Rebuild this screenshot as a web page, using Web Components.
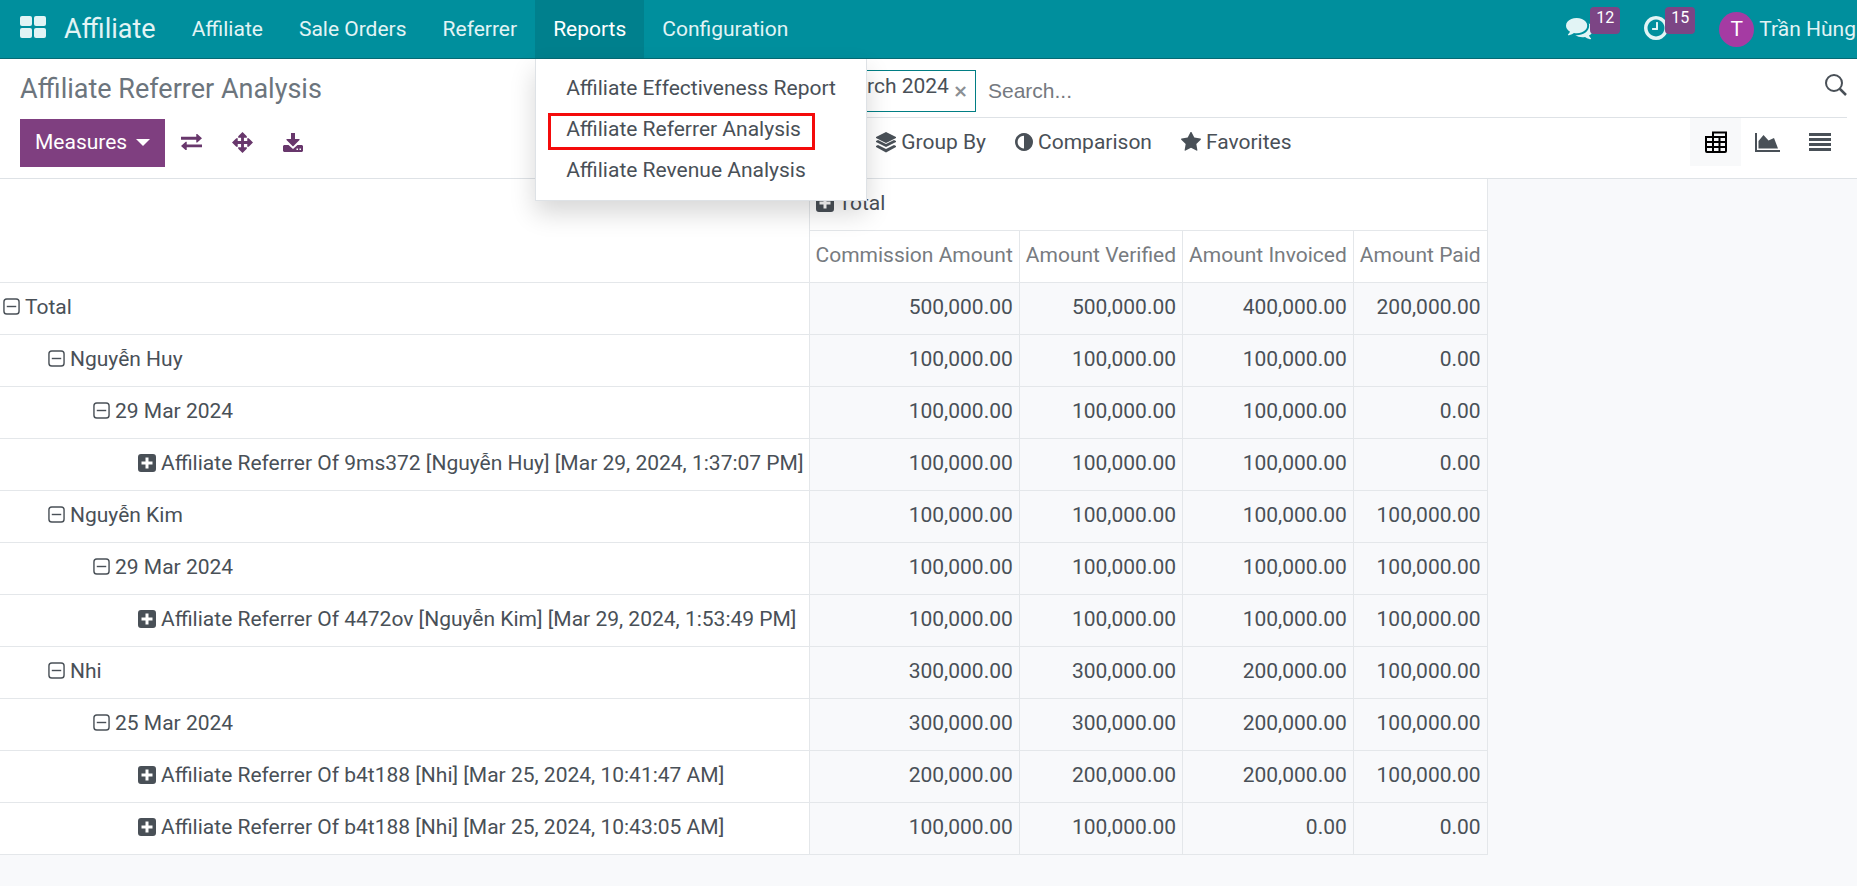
<!DOCTYPE html>
<html lang="en">
<head>
<meta charset="utf-8">
<meta name="viewport" content="width=device-width, initial-scale=1">
<title>Affiliate Referrer Analysis</title>
<style>
	html {
		height: 100%;
	}

	body {
		margin: 0;
		min-height: 100%;
		background: #f8f9fb;
		color: #495057;
		font: 21px/32px Roboto, "Noto Sans", sans-serif;
	}
</style>
</head>
<body>
<app-navbar brand="Affiliate" user="Trần Hùng">
	<nav-item label="Affiliate"></nav-item>
	<nav-item label="Sale Orders"></nav-item>
	<nav-item label="Referrer"></nav-item>
	<nav-item label="Reports" open>
		<menu-link>Affiliate Effectiveness Report</menu-link>
		<menu-link marked>Affiliate Referrer Analysis</menu-link>
		<menu-link>Affiliate Revenue Analysis</menu-link>
	</nav-item>
	<nav-item label="Configuration"></nav-item>
	<nav-counter slot="tray" icon="comments" count="12" label="Messages"></nav-counter>
	<nav-counter slot="tray" icon="clock" count="15" label="Activities"></nav-counter>
</app-navbar>
<control-panel>
	<span slot="title">Affiliate Referrer Analysis</span>
	<search-facet slot="facets">March 2024</search-facet>
	<filter-button slot="filters" icon="layers">Group By</filter-button>
	<filter-button slot="filters" icon="adjust">Comparison</filter-button>
	<filter-button slot="filters" icon="star">Favorites</filter-button>
</control-panel>
<pivot-table></pivot-table>

<script>
const circle =
  "M1664 896q0 209-103 385.5t-279.5 279.5-385.5 103-385.5-103-279.5-279.5-103-385.5 103-385.5 279.5-279.5 385.5-103 385.5 103 279.5 279.5 103 385.5z";

const icons = {
  apps: `<svg viewBox="0 0 26 22"><rect width="12" height="10" rx="2"/><rect x="14" width="12" height="10" rx="2"/><rect y="12" width="12" height="10" rx="2"/><rect x="14" y="12" width="12" height="10" rx="2"/></svg>`,
  comments: `<svg viewBox="0 128 1792 1536"><path d="M1408 768q0 139-94 257t-256.5 186.5-353.5 68.5q-86 0-176-16-124 88-278 128-36 9-86 16h-3q-11 0-20.5-8t-11.5-21q-1-3-1-6.5t.5-6.5 2-6l2.5-5 3.5-5.5 4-5 4.5-5 4-4.5q5-6 23-25t26-29.5 22.5-29 25-38.5 20.5-44q-124-72-195-177t-71-224q0-139 94-257t256.5-186.5 353.5-68.5 353.5 68.5 256.5 186.5 94 257zm384 256q0 120-71 224.5t-195 176.5q10 24 20.5 44t25 38.5 22.5 29 26 29.5 23 25q1 1 4 4.5t4.5 5 4 5 3.5 5.5l2.5 5 2 6 .5 6.5-1 6.5q-3 14-13 22t-22 7q-50-7-86-16-154-40-278-128-90 16-176 16-271 0-472-132 58 4 88 4 161 0 309-45t264-129q125-92 192-212t67-254q0-77-23-152 129 71 204 178t75 230z"/></svg>`,
  clock: `<svg viewBox="128 128 1536 1536"><path fill-rule="evenodd" d="M1024 544v448q0 14-9 23t-23 9h-320q-14 0-23-9t-9-23v-64q0-14 9-23t23-9h224v-352q0-14 9-23t23-9h64q14 0 23 9t9 23zM1440 896q0-148-73-273t-198-198-273-73-273 73-198 198-73 273 73 273 198 198 273 73 273-73 198-198 73-273z${circle}"/></svg>`,
  adjust: `<svg viewBox="128 128 1536 1536"><path fill-rule="evenodd" d="M896 1440v-1088q-148 0-273 73t-198 198-73 273 73 273 198 198 273 73z${circle}"/></svg>`,
  star: `<svg viewBox="64 60 1664 1600"><path d="M1728 647q0 22-26 48l-363 354 86 500q1 7 1 20 0 21-10.5 35.5t-30.5 14.5q-19 0-40-12l-449-236-449 236q-22 12-40 12-21 0-31.5-14.5t-10.5-35.5q0-6 2-20l86-500-364-354q-25-27-25-48 0-37 56-46l502-73 225-455q19-41 49-41t49 41l225 455 502 73q56 9 56 46z"/></svg>`,
  filter: `<svg viewBox="0 0 18 18"><path d="M0 1h18l-7 8v9l-4-4v-5z"/></svg>`,
  layers: `<svg viewBox="0 0 20 21"><path d="M10 0l10 5v1l-10 5L0 6V5zM0 9l2-1 8 4 8-4 2 1v1l-10 5-10-5zM0 14l2-1 8 4 8-4 2 1v1l-10 5.500-10-5.500z"/></svg>`,
  swap: `<svg viewBox="0 0 22 17"><path d="M0 3h16V0h1l5 4.500-5 4.500h-1V6H0zM22 14H6v3H5l-5-4.500L5 8h1v3h16z"/></svg>`,
  move: `<svg viewBox="0 0 22 22"><path d="M11 0l4.500 4.500V6h-3v3.500H16v-3h1.500L22 11l-4.500 4.500H16v-3h-3.500V16h3v1.500L11 22l-4.500-4.500V16h3v-3.500H6v3H4.500L0 11l4.500-4.500H6v3h3.500V6h-3V4.500z"/></svg>`,
  download: `<svg viewBox="0 0 20 19"><path fill-rule="evenodd" d="M8 0h4v6h4.500v1L10 13.500 3.500 7V6H8zM1 12h4.500l4.500 4 4.500-4H19l1 1v5l-1 1H1l-1-1v-5zM13.500 15.500v1.500H15v-1.500zM16.500 15.500v1.500H18v-1.500z"/></svg>`,
  search: `<svg viewBox="0 0 22 22" fill="none" stroke="currentColor" stroke-width="2"><circle cx="9" cy="9" r="8"/><path d="M14.500 14.500l6.500 6.500" stroke-width="2.500"/></svg>`,
  pivot: `<svg viewBox="0 0 22 22" fill="none" stroke="currentColor" stroke-width="2"><path d="M8 6V1.500h13V20a1 1 0 0 1-1 1H2a1 1 0 0 1-1-1V6h20M1 11h20M1 16h20M8 6v15M14.500 6v15"/></svg>`,
  chart: `<svg viewBox="0 0 25 19"><path d="M0 0h2v17h23v2H0zM3.500 15.500V8L8.500 2l5 5.500L19 5l4 10.500z"/></svg>`,
  list: `<svg viewBox="0 0 22 19"><path d="M0 0h22v3H0zM0 5h22v3H0zM0 10h22v3H0zM0 15h22v3H0z"/></svg>`,
  plus: `<svg viewBox="0 0 18 18"><path fill-rule="evenodd" d="M3 0h12a3 3 0 0 1 3 3v12a3 3 0 0 1-3 3H3a3 3 0 0 1-3-3V3a3 3 0 0 1 3-3zM7.500 3.500v4h-4v3h4v4h3v-4h4v-3h-4v-4z"/></svg>`,
  minus: `<svg viewBox="0 0 18 18" fill="none" stroke="currentColor" stroke-width="1.500"><rect x="1" y="1" width="16" height="16" rx="3"/><path d="M4 9h10"/></svg>`,
};

class AppIcon extends HTMLElement {
  constructor() {
    super();
    this.attachShadow({ mode: "open" });
  }

  connectedCallback() {
    this.shadowRoot.innerHTML = `
      <style>
        :host {
          display: inline-block;
          flex: none;
          width: 18px;
          line-height: 0;
        }
        svg {
          display: block;
          width: 100%;
          fill: currentColor;
        }
        svg[fill="none"] {
          fill: none;
        }
      </style>
      ${icons[this.getAttribute("name")] || ""}`;
    this.setAttribute("aria-hidden", "true");
  }
}

class MenuLink extends HTMLElement {
  constructor() {
    super();
    this.attachShadow({ mode: "open" }).innerHTML = `
      <style>
        :host {
          display: block;
        }
        a {
          display: block;
          padding: 4px 30px 5px;
          color: #495057;
          text-decoration: none;
          white-space: nowrap;
        }
        span {
          display: inline-block;
          position: relative;
          vertical-align: top;
        }
        :host([marked]) span::after {
          content: "";
          position: absolute;
          inset: 0 -14px -5px -18px;
          border: 3px solid #f40b0b;
        }
      </style>
      <a href="#"><span><slot></slot></span></a>`;
  }
}

class NavItem extends HTMLElement {
  constructor() {
    super();
    this.attachShadow({ mode: "open" });
  }

  connectedCallback() {
    this.shadowRoot.innerHTML = `
      <style>
        :host {
          display: flex;
          position: relative;
        }
        button {
          padding: 0 18px;
          border: 0;
          background: none;
          color: #e2f4f5;
          font: inherit;
          white-space: nowrap;
        }
        :host([open]) button {
          background: #00808d;
          color: #fff;
        }
        #menu {
          display: none;
          position: absolute;
          top: 100%;
          left: 0;
          margin-top: 1px;
          padding: 9px 0;
          border: 1px solid #dee2e6;
          border-top: 0;
          background: #fff;
          box-shadow: 0 12px 24px rgba(0, 0, 0, 0.16);
        }
        :host([open]) #menu {
          display: block;
        }
      </style>
      <button type="button">${this.getAttribute("label")}</button>
      <div id="menu"><slot></slot></div>`;
    this.shadowRoot.querySelector("button").addEventListener("click", this);
  }

  handleEvent() {
    if (this.children.length) {
      this.toggleAttribute("open");
    }
  }
}

class NavCounter extends HTMLElement {
  constructor() {
    super();
    this.attachShadow({ mode: "open" });
  }

  connectedCallback() {
    this.shadowRoot.innerHTML = `
      <style>
        :host {
          display: flex;
        }
        button {
          display: flex;
          align-items: center;
          position: relative;
          padding: 0 27px 2px 0;
          border: 0;
          background: none;
          color: #e2f4f5;
          font: inherit;
        }
        app-icon {
          width: 24px;
        }
        app-icon[name="comments"] {
          width: 27px;
        }
        #badge {
          position: absolute;
          top: 7px;
          right: 0;
          height: 27px;
          padding: 0 6px;
          border-radius: 4px;
          background: #7c4585;
          color: #fff;
          font-size: 16px;
          line-height: 21px;
        }
      </style>
      <button type="button" aria-label="${this.getAttribute("label")}">
        <app-icon name="${this.getAttribute("icon")}"></app-icon>
        <span id="badge">${this.getAttribute("count")}</span>
      </button>`;
  }
}

class AppNavbar extends HTMLElement {
  constructor() {
    super();
    this.attachShadow({ mode: "open" });
  }

  connectedCallback() {
    const user = this.getAttribute("user");
    this.shadowRoot.innerHTML = `
      <style>
        :host {
          display: flex;
          position: relative;
          z-index: 10;
          height: 58px;
          border-bottom: 1px solid #066a74;
          background: #008f9d;
          color: #e2f4f5;
        }
        button {
          display: flex;
          align-items: center;
          border: 0;
          background: none;
          color: inherit;
          font: inherit;
        }
        #apps {
          padding: 0 0 4px 20px;
        }
        #apps app-icon {
          width: 26px;
        }
        #brand {
          padding: 0 18px;
          align-self: center;
          color: inherit;
          font-size: 27px;
          text-decoration: none;
        }
        nav {
          display: flex;
        }
        #tray {
          display: flex;
          gap: 24px;
          margin-left: auto;
        }
        #user {
          gap: 5px;
          padding: 0 1px 0 0;
          white-space: nowrap;
        }
        #avatar {
          width: 35px;
          border-radius: 50%;
          background: #a53ba3;
          color: #fff;
          line-height: 35px;
        }
      </style>
      <button id="apps" type="button" aria-label="Apps"><app-icon name="apps"></app-icon></button>
      <a id="brand" href="#">${this.getAttribute("brand")}</a>
      <nav><slot></slot></nav>
      <div id="tray">
        <slot name="tray"></slot>
        <button id="user" type="button"><span id="avatar">${user[0]}</span>${user}</button>
      </div>`;
  }
}

class SearchFacet extends HTMLElement {
  constructor() {
    super();
    this.attachShadow({ mode: "open" }).innerHTML = `
      <style>
        :host {
          display: flex;
          flex: none;
          height: 40px;
          border: 1px solid #017e84;
          white-space: nowrap;
        }
        #kind {
          display: flex;
          align-items: center;
          padding: 0 12px;
          background: #017e84;
          color: #fff;
        }
        #value {
          padding-left: 6px;
          line-height: 30px;
        }
        button {
          padding: 0 7px 0 4px;
          border: 0;
          background: none;
          color: #8a8f94;
          font: bold 18px/38px "DejaVu Sans", sans-serif;
        }
      </style>
      <span id="kind"><app-icon name="filter"></app-icon></span>
      <span id="value"><slot></slot></span>
      <button type="button" aria-label="Remove">×</button>`;
    this.shadowRoot.querySelector("button").addEventListener("click", this);
  }

  handleEvent() {
    this.remove();
  }
}

class FilterButton extends HTMLElement {
  constructor() {
    super();
    this.attachShadow({ mode: "open" });
  }

  connectedCallback() {
    this.shadowRoot.innerHTML = `
      <style>
        :host {
          display: block;
        }
        button {
          display: flex;
          align-items: center;
          gap: 5px;
          padding: 0;
          border: 0;
          background: none;
          color: inherit;
          font: inherit;
          white-space: nowrap;
        }
        app-icon[name="layers"],
        app-icon[name="star"] {
          width: 20px;
        }
      </style>
      <button type="button"><app-icon name="${this.getAttribute("icon")}"></app-icon><span><slot></slot></span></button>`;
  }
}

class ControlPanel extends HTMLElement {
  constructor() {
    super();
    this.attachShadow({ mode: "open" }).innerHTML = `
      <style>
        :host {
          display: grid;
          grid-template-columns: minmax(0, 5fr) minmax(0, 7fr);
          grid-template-rows: 59px 49px;
          column-gap: 12px;
          padding: 0 10px 11px 20px;
          border-bottom: 1px solid #dee2e6;
          background: #fff;
        }
        h1 {
          margin: 0;
          padding-top: 14px;
          color: #6c757d;
          font-size: 27px;
          font-weight: 400;
        }
        button {
          border: 0;
          background: none;
          color: inherit;
          font: inherit;
        }
        #search {
          display: flex;
          align-items: center;
          gap: 12px;
          padding-top: 6px;
          border-bottom: 1px solid #dee2e6;
        }
        input {
          flex: 1;
          min-width: 0;
          padding: 0;
          border: 0;
          outline: 0;
          color: #495057;
          font: 21px/32px "Liberation Sans", Arial, sans-serif;
        }
        input::placeholder {
          color: #757980;
        }
        #go {
          padding: 0 0 4px;
        }
        #go app-icon {
          width: 22px;
        }
        #actions,
        #filters,
        #views {
          display: flex;
          align-items: center;
        }
        #actions {
          align-items: stretch;
          padding-top: 1px;
          color: #68376c;
        }
        #actions button {
          display: flex;
          align-items: center;
          padding: 0 15px 2px;
        }
        #actions #measures {
          gap: 9px;
          margin-right: 1px;
          background: #7f3f80;
          color: #fff;
        }
        #measures::after {
          content: "";
          border: 7px solid transparent;
          border-top: 7px solid;
          border-bottom: 0;
        }
        #actions app-icon {
          width: 21px;
        }
        #actions app-icon[name="download"] {
          width: 20px;
        }
        #filters {
          gap: 29px;
          padding: 0 0 1px 88px;
        }
        #views {
          gap: 1px;
          margin-left: auto;
          align-self: stretch;
          padding-right: 2px;
        }
        #views button {
          display: flex;
          align-items: center;
          justify-content: center;
          width: 51px;
          height: 100%;
          padding: 0;
        }
        #views app-icon {
          width: 22px;
        }
        #views app-icon[name="chart"] {
          width: 25px;
        }
        #views button[aria-pressed="true"] {
          background: #f8f9fa;
          color: #000;
        }
      </style>
      <h1><slot name="title"></slot></h1>
      <div id="search">
        <slot name="facets"></slot>
        <input type="text" placeholder="Search..." aria-label="Search">
        <button id="go" type="button" aria-label="Search"><app-icon name="search"></app-icon></button>
      </div>
      <div id="actions">
        <button id="measures" type="button">Measures</button>
        <button type="button" aria-label="Flip axis"><app-icon name="swap"></app-icon></button>
        <button type="button" aria-label="Expand all"><app-icon name="move"></app-icon></button>
        <button type="button" aria-label="Download"><app-icon name="download"></app-icon></button>
      </div>
      <div id="filters">
        <slot name="filters"></slot>
        <div id="views">
          <button type="button" aria-label="Pivot" aria-pressed="true"><app-icon name="pivot"></app-icon></button>
          <button type="button" aria-label="Graph" aria-pressed="false"><app-icon name="chart"></app-icon></button>
          <button type="button" aria-label="List" aria-pressed="false"><app-icon name="list"></app-icon></button>
        </div>
      </div>`;
    this.shadowRoot.getElementById("views").addEventListener("click", this);
  }

  handleEvent(event) {
    const clicked = event.target.closest("button");
    if (!clicked) return;
    for (const button of event.currentTarget.children) {
      button.setAttribute("aria-pressed", button === clicked);
    }
  }
}

const measures = ["Commission Amount", "Amount Verified", "Amount Invoiced", "Amount Paid"];

// level, icon, label, one value per measure
const rows = [
  [0, "minus", "Total", 500000, 500000, 400000, 200000],
  [1, "minus", "Nguyễn Huy", 100000, 100000, 100000, 0],
  [2, "minus", "29 Mar 2024", 100000, 100000, 100000, 0],
  [3, "plus", "Affiliate Referrer Of 9ms372 [Nguyễn Huy] [Mar 29, 2024, 1:37:07 PM]", 100000, 100000, 100000, 0],
  [1, "minus", "Nguyễn Kim", 100000, 100000, 100000, 100000],
  [2, "minus", "29 Mar 2024", 100000, 100000, 100000, 100000],
  [3, "plus", "Affiliate Referrer Of 4472ov [Nguyễn Kim] [Mar 29, 2024, 1:53:49 PM]", 100000, 100000, 100000, 100000],
  [1, "minus", "Nhi", 300000, 300000, 200000, 100000],
  [2, "minus", "25 Mar 2024", 300000, 300000, 200000, 100000],
  [3, "plus", "Affiliate Referrer Of b4t188 [Nhi] [Mar 25, 2024, 10:41:47 AM]", 200000, 200000, 200000, 100000],
  [3, "plus", "Affiliate Referrer Of b4t188 [Nhi] [Mar 25, 2024, 10:43:05 AM]", 100000, 100000, 0, 0],
];

const format = (value) =>
  value.toLocaleString("en-US", { minimumFractionDigits: 2 });

class PivotTable extends HTMLElement {
  constructor() {
    super();
    this.attachShadow({ mode: "open" });
  }

  connectedCallback() {
    this.shadowRoot.innerHTML = `
      <style>
        :host {
          display: block;
          overflow-x: auto;
        }
        table {
          border-spacing: 0;
          background: #fff;
        }
        th,
        td {
          padding: 8px 6px 11px;
          border: solid #e4e7ea;
          border-width: 0 1px 1px 0;
          font-weight: 400;
          text-align: left;
          white-space: nowrap;
        }
        thead tr + tr th {
          color: #777b80;
        }
        tbody th {
          padding-right: 5px;
          padding-left: calc(var(--level) * 45px + 3px);
        }
        td {
          background: #f8f9fb;
          text-align: right;
        }
        button {
          display: flex;
          align-items: center;
          gap: 5px;
          padding: 0;
          border: 0;
          background: none;
          color: inherit;
          font: inherit;
        }
        app-icon[name="minus"] {
          width: 17px;
          margin-bottom: 2px;
        }
      </style>
      <table>
        <thead>
          <tr>
            <th rowspan="2"></th>
            <th colspan="${measures.length}">${this.#header("plus", "Total")}</th>
          </tr>
          <tr>${measures.map((name) => `<th>${name}</th>`).join("")}</tr>
        </thead>
        <tbody>${rows.map((row) => this.#row(row)).join("")}</tbody>
      </table>`;
  }

  #header(icon, label) {
    return `<button type="button"><app-icon name="${icon}"></app-icon>${label}</button>`;
  }

  #row([level, icon, label, ...values]) {
    return `<tr>
      <th style="--level: ${level}">${this.#header(icon, label)}</th>
      ${values.map((value) => `<td>${format(value)}</td>`).join("")}
    </tr>`;
  }
}

customElements.define("app-icon", AppIcon);
customElements.define("menu-link", MenuLink);
customElements.define("nav-item", NavItem);
customElements.define("nav-counter", NavCounter);
customElements.define("app-navbar", AppNavbar);
customElements.define("search-facet", SearchFacet);
customElements.define("filter-button", FilterButton);
customElements.define("control-panel", ControlPanel);
customElements.define("pivot-table", PivotTable);
</script>
</body>
</html>
